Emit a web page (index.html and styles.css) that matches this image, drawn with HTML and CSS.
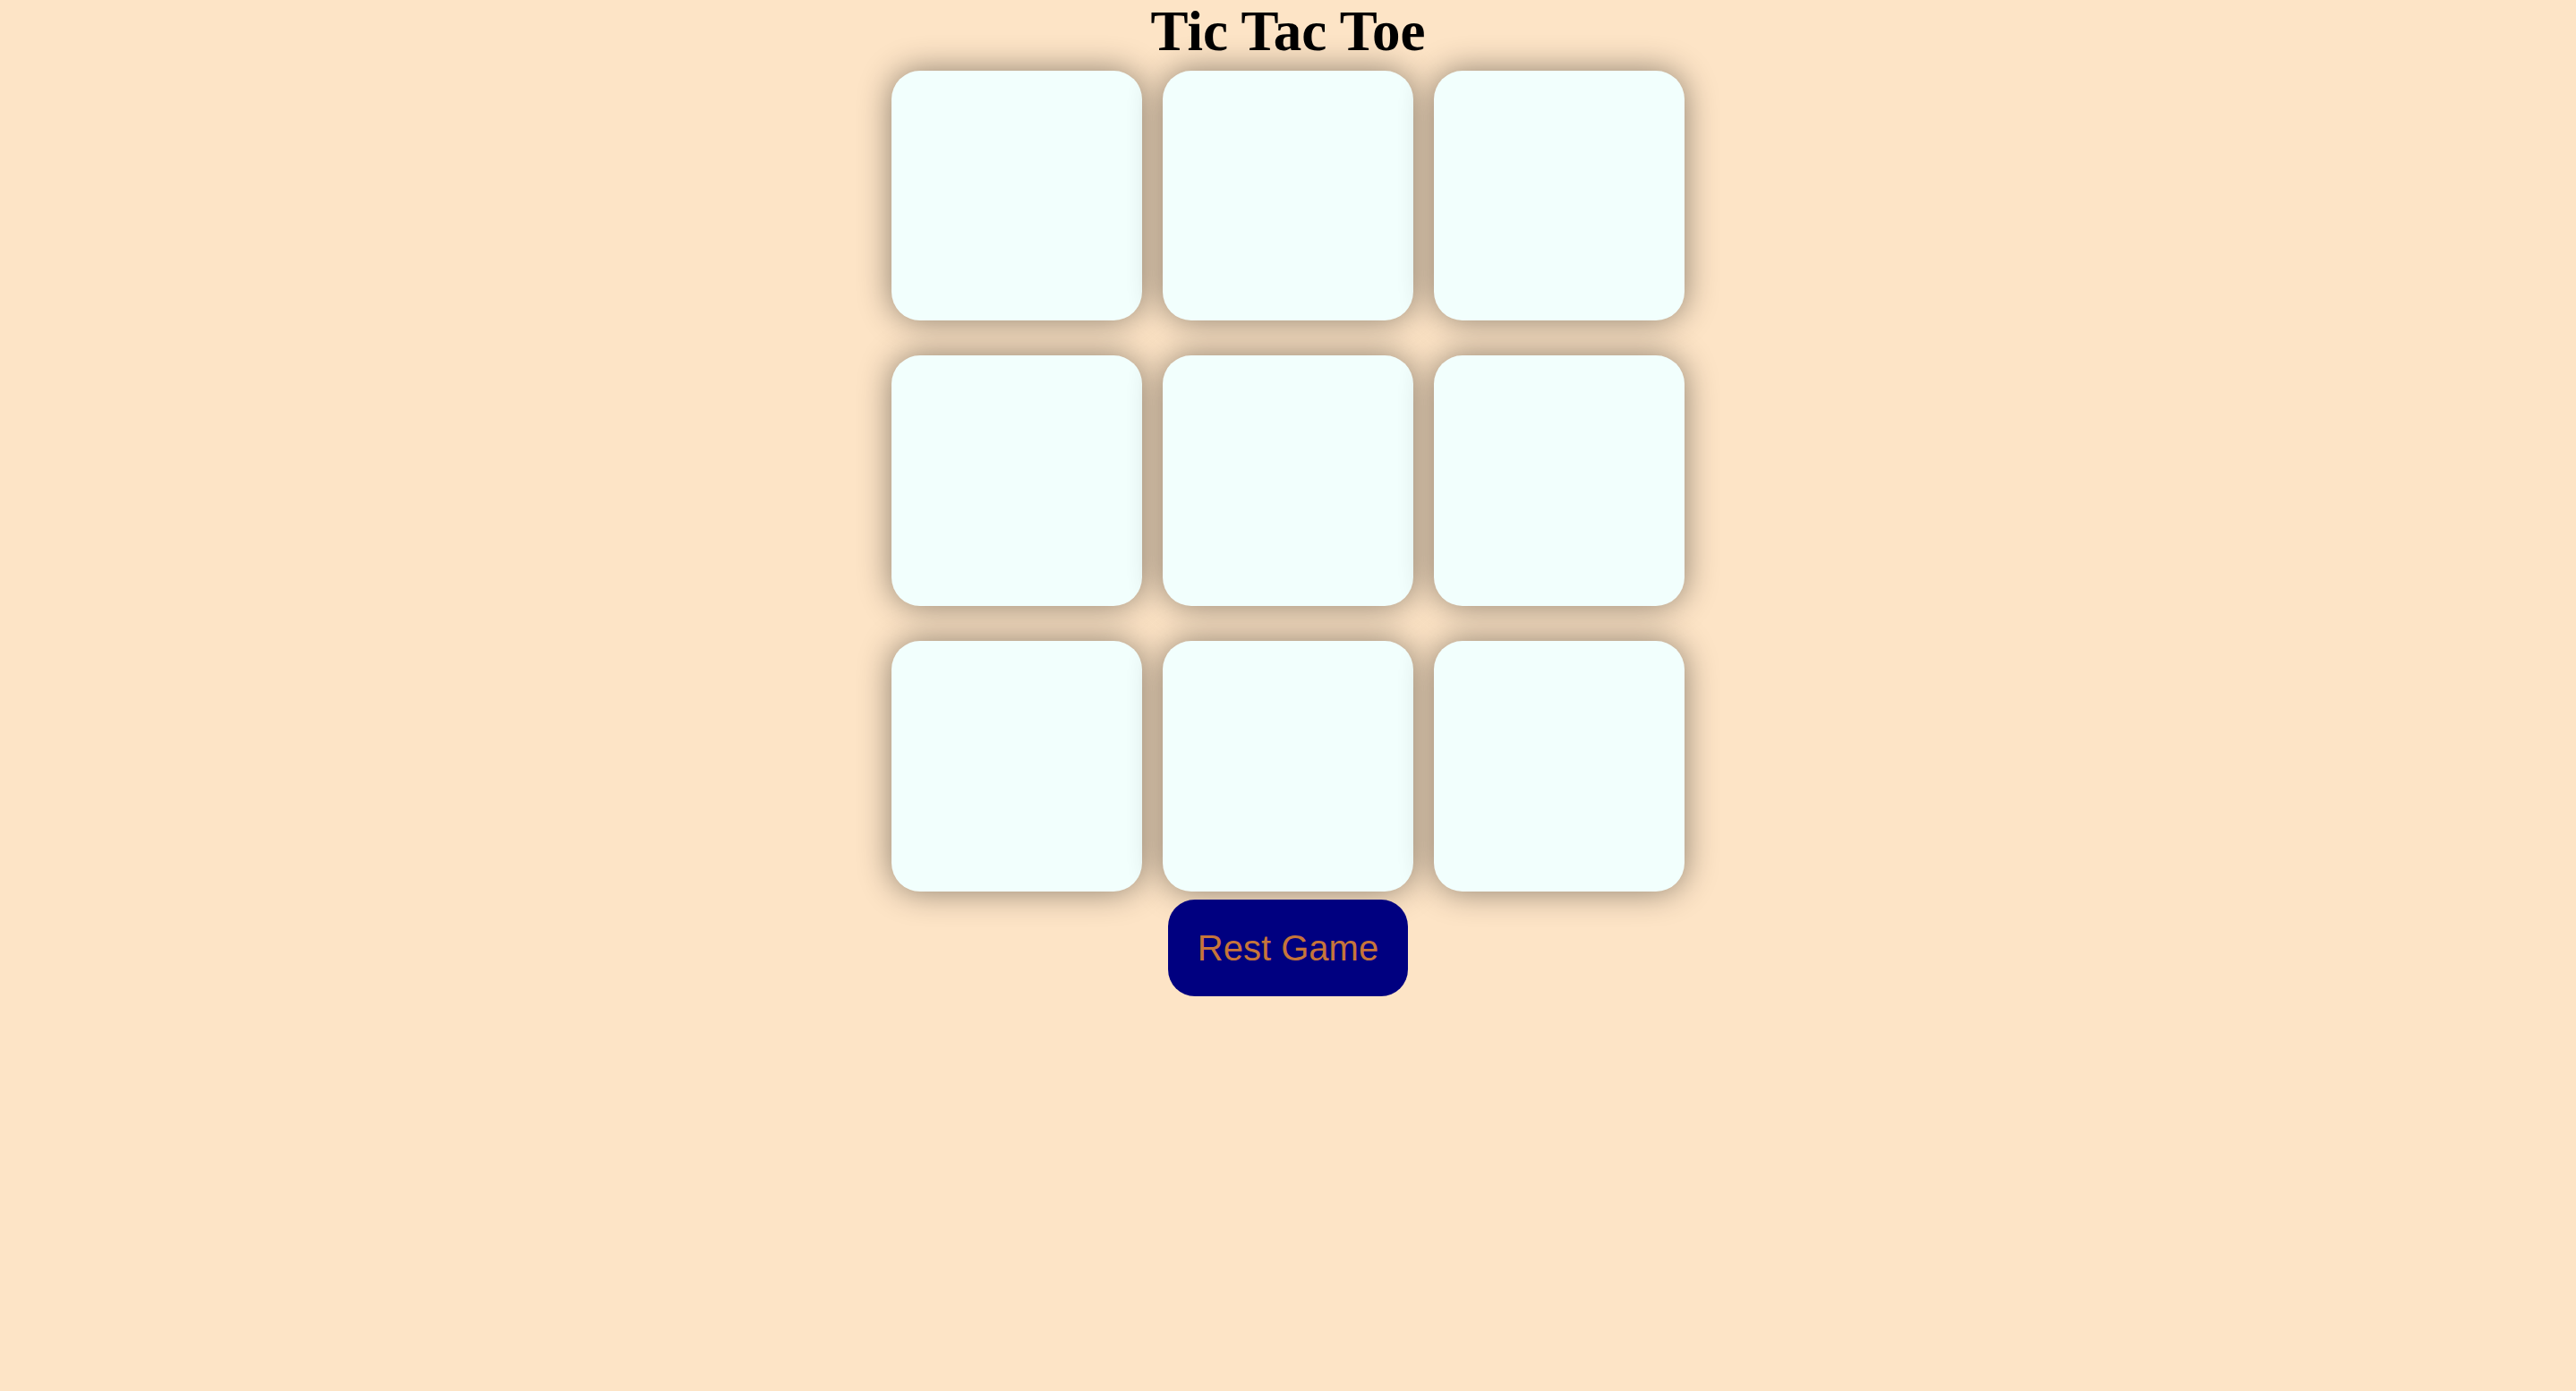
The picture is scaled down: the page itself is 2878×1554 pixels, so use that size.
FILE: index.html
```html
<!DOCTYPE html>
<html>
<head>
<meta charset="utf-8">
<title>Tic Tac Toe</title>
<link rel="stylesheet" href="styles.css">
</head>
<body>
<main class="page">
  <h1 class="title">Tic Tac Toe</h1>
  <div class="game">
    <div class="container">
      <button class="box"></button>
      <button class="box"></button>
      <button class="box"></button>
      <button class="box"></button>
      <button class="box"></button>
      <button class="box"></button>
      <button class="box"></button>
      <button class="box"></button>
      <button class="box"></button>
    </div>
  </div>
  <button class="reset">Rest Game</button>
</main>
</body>
</html>
```
FILE: styles.css
```css
* { box-sizing: border-box; }
html, body { margin: 0; padding: 0; }
body {
  background-color: #fde4c6;
  text-align: center;
}
.page {
  display: flex;
  flex-direction: column;
  align-items: center;
}
.title {
  margin: 0;
  font-family: "Liberation Serif", "Times New Roman", serif;
  font-weight: bold;
  font-size: 63px;
  line-height: 71px;
  color: #000;
}
.game {
  height: 60vmin;
  display: flex;
  justify-content: center;
  align-items: center;
}
.container {
  width: 60vmin;
  height: 60vmin;
  display: flex;
  flex-wrap: wrap;
  gap: 1.5vmin;
  justify-content: center;
  align-items: center;
}
.box {
  width: 18vmin;
  height: 18vmin;
  border: none;
  border-radius: 32px;
  background-color: #f2fffd;
  box-shadow: 0 0 36px rgba(0, 0, 0, 0.45);
  padding: 0;
}
.reset {
  margin-top: 2px;
  padding: 31px 33px;
  font-family: "Liberation Sans", Arial, sans-serif;
  font-size: 40px;
  line-height: 46px;
  color: #c6753a;
  background-color: #000080;
  border: none;
  border-radius: 30px;
}
```
